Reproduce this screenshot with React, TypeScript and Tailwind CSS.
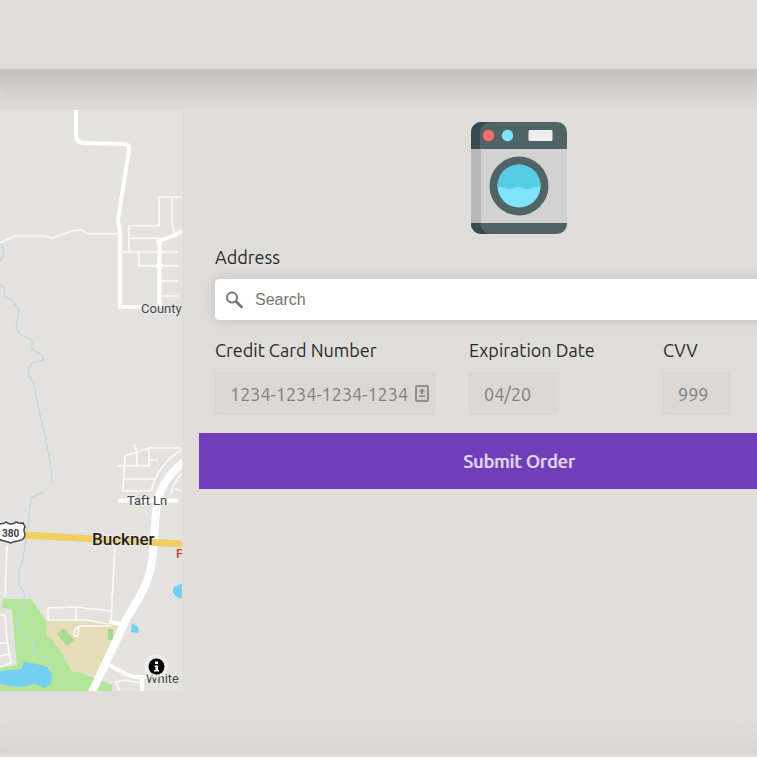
import React from "react";

function StreetMap() {
  return (
    <svg
      viewBox="0 110 182 581"
      preserveAspectRatio="xMinYMin slice"
      className="block h-full w-full"
      role="img"
      aria-label="Street map around Buckner"
    >
      <rect x="0" y="110" width="182" height="581" fill="#e4e3e0" />

      {/* Parks */}
      <path d="M3 599H31L46 621L48 633L61 652L72 671L83 673L112 685V691H0V667L16 664L12 609L2 608Z" fill="#b4e69a" />
      <path d="M46 621H108L120 627L117 640L102 670L96 676L72 671L61 652L53 640L47 636Z" fill="#e5deb9" />
      <path d="M57 634L64 628L74 640L67 646Z M108 629H113V640H108Z" fill="#a9dc91" />
      <path d="M0 609L12 610L17 665L0 668Z" fill="#e4e3e0" />

      {/* Water */}
      <path d="M0 671L21 669L24 662L37 664L47 667L52 674L51 684L45 688L35 684L22 687L10 686L0 684Z" fill="#75cff0" />
      <path d="M182 584C174 585 171 590 174 594C177 598 180 599 182 598Z" fill="#75cff0" />
      <path d="M132 623L139 628L138 633L131 632Z" fill="#75cff0" />
      <g fill="none" stroke="#c0d6e2" strokeWidth="1.2" strokeLinejoin="round">
        <path d="M0 243C5 247 5 254 0 261" />
        <path d="M0 285L4 287L5 297L12 300L19 310L16 328L21 335L32 340L32 349L42 355L44 360L32 363L28 370L29 376L34 383L37 402L46 440L52 475L51 482" />
        <path d="M44 492L38 494L31 498L28 525L26 540L23 558L19 572L19 585L24 592L25 607L17 624L20 632L28 640L34 640L32 653L44 658L50 664L56 666" />
      </g>

      {/* Minor roads */}
      <g fill="none" stroke="#fbfbf7" strokeWidth="1.6">
        <path d="M0 243L15 236H45L52 238L58 236L75 230L82 230L87 234H119" />
        <path d="M182 197H159V226H129V252 M129 238H157 M172 197V220L174 233 M123 252H178 M139 252V266H178 M162 281H178 M162 296H178" />
        <path d="M182 448H149L125 456L123 491H151 M134 444L137 452V466 M118 466H149V448 M150 460H158 M124 479H155 M151 491C155 475 166 458 182 450 M171 494C172 486 176 480 182 473 M175 489L182 491" />
        <path d="M7 545L5 597 M115 546L111 622 M48 620V608L75 607L111 611 M76 607V621 M48 620H85L109 624 M111 626H80C72 629 73 638 77 636C79 634 78 630 79 627" />
        <path d="M0 615H5L7 640L11 663L0 667 M0 643H7 M0 656L10 654 M119 691L116 682L126 680L140 683" />
      </g>

      {/* Collector roads */}
      <g fill="none" stroke="#ffffff" strokeWidth="4" strokeLinejoin="round">
        <path d="M76 110V134Q76 143 84 143L124 144Q130 144 129 150L118 220L120 233V307H143" />
        <path d="M159.500 307V241L175 235L182 231" />
        <path d="M118 500.500H178 M109 622L121 624L125 627 M109 665L126 674L134 677H153 M142 677V691" />
      </g>
      <circle cx="159.500" cy="241" r="3.500" fill="#fff" />
      <circle cx="159.500" cy="266" r="3.500" fill="#fff" />

      {/* Highway over the main road */}
      <path d="M185 461C165 477 157 493 156 512L153 552C151 582 139 598 127 618L92 692" fill="none" stroke="#fff" strokeWidth="8" />
      <path d="M25 535L182 544" stroke="#f1cf62" strokeWidth="7" fill="none" />

      {/* Route shield */}
      <path d="M-3 523Q3 525 6 522Q11 526 16 522Q20 524 23 523L25 527Q23 530 25 534Q25 540 18 541Q12 542 11 543Q9 542 4 541Q-1 540 -3 537Z" fill="#fff" stroke="#4a4748" strokeWidth="1.5" />
      <text x="2" y="537" fontSize="10" className="font-['Roboto',sans-serif] font-bold" fill="#454345">380</text>

      {/* Labels */}
      <g className="font-['Roboto',sans-serif]" fill="#424248" stroke="#f2f1ef" strokeWidth="1" paintOrder="stroke">
        <text x="141" y="313" fontSize="13">County</text>
        <text x="127" y="505" fontSize="13">Taft Ln</text>
        <text x="146" y="683" fontSize="13">White</text>
        <text x="92" y="545" fontSize="17" fill="#1e1e1e" className="font-medium">Buckner</text>
        <text x="176" y="558" fontSize="13" fill="#bc4a30" stroke="none" className="font-medium">F</text>
      </g>

      {/* Attribution */}
      <circle cx="156" cy="666" r="12" fill="#f1f0ee" fillOpacity="0.7" />
      <circle cx="156.500" cy="666.500" r="8" fill="#000" />
      <path d="M155 661.500H158V664H155Z M154.500 665.500H158V670H159V671.500H154V670H155.500V667H154.500Z" fill="#fff" />
    </svg>
  );
}

function WasherIcon() {
  return (
    <svg viewBox="0 0 96 112" className="h-28 w-24" role="img" aria-label="Washing machine">
      <clipPath id="washer-body">
        <rect width="96" height="112" rx="10" />
      </clipPath>
      <clipPath id="washer-door">
        <circle cx="48" cy="64" r="21.500" />
      </clipPath>
      <g clipPath="url(#washer-body)">
        <rect width="96" height="112" fill="#d2d2d2" />
        <rect y="26" width="10" height="76" fill="#b7b7b7" />
        <path d="M0 0H96V27H0Z M0 101H96V112H0Z" fill="#506468" />
        <path d="M0 0H20Q9 1 9 12V27H0Z M0 101H9Q10 111 20 112H0Z" fill="#384a50" />
      </g>
      <circle cx="17.500" cy="13.500" r="5.700" fill="#ff6a6c" />
      <circle cx="36.500" cy="13.500" r="5.700" fill="#80e4ff" />
      <rect x="57.500" y="8" width="24" height="11" rx="1.500" fill="#efeded" />
      <circle cx="48" cy="64" r="29.500" fill="#506468" />
      <g clipPath="url(#washer-door)">
        <rect x="26" y="42" width="44" height="44" fill="#80e4ff" />
        <path d="M26 42H70V65Q65 64 61 66Q56 68 51 66Q47 64 43 66Q38 68 34 66Q30 64 26 65Z" fill="#55cde5" />
      </g>
    </svg>
  );
}

function SearchIcon() {
  return (
    <svg viewBox="0 0 18 18" className="size-[18px] shrink-0" fill="none" stroke="#757575" aria-hidden="true">
      <circle cx="7" cy="6.500" r="5" strokeWidth="2" />
      <path d="M11 10.500L16.500 16" strokeWidth="2.600" strokeLinecap="round" />
    </svg>
  );
}

function AutofillIcon() {
  return (
    <svg viewBox="0 0 14 17" className="h-[17px] w-[14px] shrink-0" aria-hidden="true">
      <rect x="1" y="1" width="12" height="15" rx="1" fill="#d2d1cc" stroke="#91918f" strokeWidth="2" />
      <path d="M6 3.500H8V6H10L7 9L4 6H6Z" fill="#858583" transform="rotate(180 7 6.250)" />
      <path d="M4 10.500H10V12H4Z" fill="#858583" />
    </svg>
  );
}

type FieldProps = { id: string; label: string; placeholder: string; width: string; icon?: React.ReactNode };

function Field({ id, label, placeholder, width, icon }: FieldProps) {
  return (
    <div>
      <label htmlFor={id} className="block whitespace-nowrap leading-6">
        {label}
      </label>
      <div className={`mt-[10px] flex h-[43px] items-center rounded border border-[#d4d6d6] bg-[#dcd9d2] pl-[14px] pr-[5px] ${width}`}>
        <input id={id} placeholder={placeholder} className="w-full min-w-0 bg-transparent outline-none placeholder:text-[#7c8084]" />
        {icon}
      </div>
    </div>
  );
}

export default function App() {
  return (
    <div className="flex min-h-screen flex-col overflow-hidden bg-[#dfdeda] font-['Ubuntu','Noto_Sans',sans-serif] text-lg text-[#2a2a2a]">
      <header className="h-[69px] shrink-0 bg-[#dfdeda] shadow-[0_0_25px_20px_rgba(0,0,0,0.13)]" />
      <main className="flex flex-1 gap-[17px] pb-[63px] pt-[41px]">
        <section className="relative h-[581px] w-[182px] shrink-0 overflow-hidden">
          <StreetMap />
        </section>
        <form className="w-[640px] shrink-0 pt-3" onSubmit={(e) => e.preventDefault()}>
          <div className="flex justify-center">
            <WasherIcon />
          </div>
          <div className="px-4 pt-[11px]">
            <label htmlFor="address" className="block leading-6">
              Address
            </label>
            <div className="mt-[10px] flex h-[41px] items-center gap-3 rounded bg-white pl-[10px] shadow-[0_0_10px_2px_rgba(0,0,0,0.1)]">
              <SearchIcon />
              <input
                id="address"
                type="text"
                placeholder="Search"
                className="w-full bg-transparent font-['Liberation_Sans',sans-serif] text-base outline-none placeholder:text-[#757575]"
              />
            </div>
            <div className="mt-[18px] grid grid-cols-[220px_160px_67px] gap-[34px]">
              <Field id="card" label="Credit Card Number" placeholder="1234-1234-1234-1234" width="w-[220px]" icon={<AutofillIcon />} />
              <Field id="expiry" label="Expiration Date" placeholder="04/20" width="w-[90px]" />
              <Field id="cvv" label="CVV" placeholder="999" width="w-[67px]" />
            </div>
          </div>
          <button type="submit" className="mt-[18px] h-14 w-full bg-[#6f3eb9] font-medium text-[#e8dcf3] [text-shadow:1px_0_0_rgba(232,220,243,0.5)]">
            Submit Order
          </button>
        </form>
      </main>
      <footer className="h-[3px] shrink-0 bg-[#dfdeda] shadow-[0_0_30px_14px_rgba(0,0,0,0.045)]" />
    </div>
  );
}
